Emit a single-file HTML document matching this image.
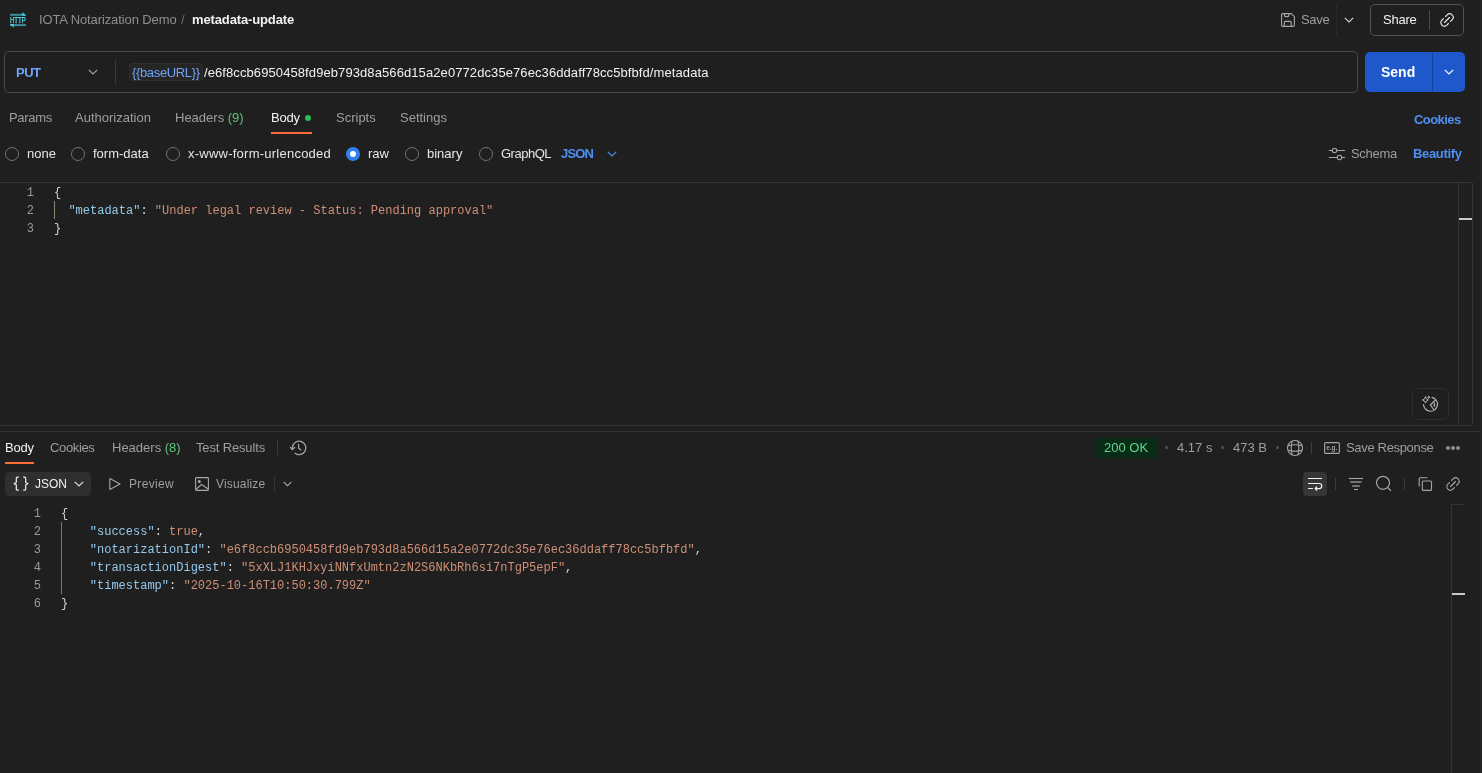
<!DOCTYPE html>
<html><head><meta charset="utf-8">
<style>
*{box-sizing:border-box;margin:0;padding:0}
html,body{width:1482px;height:773px;overflow:hidden;background:#1f1f1f;font-family:"Liberation Sans",sans-serif;font-size:13px;color:#e6e6e6}
.a{position:absolute;white-space:pre;line-height:1}
.t2{color:#9e9e9e}
.blue{color:#4f8ef2}
.code{position:absolute;font-family:"Liberation Mono",monospace;font-size:12px;line-height:18px;white-space:pre;color:#d4d4d4}
.ln{position:absolute;font-family:"Liberation Mono",monospace;font-size:12px;line-height:18px;white-space:pre;color:#9a9a9a;text-align:right}
.k{color:#93caec}.s{color:#cf8f76}.b{color:#cf9173}
svg{position:absolute;overflow:visible}
.hl{position:absolute;background:#363636}
.rad{position:absolute;top:147px;width:14px;height:14px;border:1px solid #737373;border-radius:50%}
</style></head><body><div id="root" style="position:absolute;left:0;top:0;width:1482px;height:773px;will-change:transform">

<!-- ===== header ===== -->
<svg style="left:0;top:0" width="34" height="34" viewBox="0 0 34 34">
  <rect x="10" y="13.8" width="15.5" height="2" fill="#3a8f9c"/>
  <path d="M22.2 12 L25.9 15.7 L22.6 15.7 Z" fill="#4fd6ea"/>
  <rect x="10" y="24.1" width="15.9" height="2" fill="#3a8f9c"/>
  <path d="M10 24.1 L13.8 27.7 L13.6 24.1 Z" fill="#4fd6ea"/>
  <text x="9.9" y="23.2" font-family="Liberation Sans" font-size="8.4" fill="#55e0f2" stroke="#55e0f2" stroke-width="0.25" textLength="15.8" lengthAdjust="spacingAndGlyphs">HTTP</text>
</svg>
<div class="a" style="left:39px;top:13px;color:#8f8f8f;letter-spacing:-0.11px">IOTA Notarization Demo</div>
<div class="a" style="left:181px;top:13px;color:#6b6b6b">/</div>
<div class="a" style="left:192px;top:13px;color:#f2f2f2;font-weight:700;letter-spacing:-0.13px">metadata-update</div>

<svg style="left:1281px;top:13px" width="14" height="14" viewBox="0 0 14 14" fill="none" stroke="#a6a6a6" stroke-width="1.1">
  <path d="M1.5 0.6 H10.3 L13.4 3.7 V12 a1.4 1.4 0 0 1 -1.4 1.4 H2 a1.4 1.4 0 0 1 -1.4 -1.4 V2 a1.4 1.4 0 0 1 1.4 -1.4Z"/>
  <path d="M3.5 0.6 V2.6 a1 1 0 0 0 1 1 H6.8 a1 1 0 0 0 1 -1 V0.6"/>
  <path d="M3.3 13.4 V9.4 a1 1 0 0 1 1 -1 H9.2 a1 1 0 0 1 1 1 V13.4"/>
</svg>
<div class="a t2" style="left:1301px;top:13px;letter-spacing:-0.3px">Save</div>
<div class="hl" style="left:1336px;top:4px;width:1px;height:32px;background:#2a2a2a"></div>
<svg style="left:1344px;top:17px" width="10" height="6" viewBox="0 0 10 6" fill="none" stroke="#d0d0d0" stroke-width="1.2"><path d="M0.8 0.8 L5 5 L9.2 0.8"/></svg>
<div style="position:absolute;left:1370px;top:4px;width:94px;height:32px;border:1px solid #525252;border-radius:5px"></div>
<div class="a" style="left:1383px;top:13px;color:#f2f2f2;letter-spacing:-0.25px">Share</div>
<div class="hl" style="left:1429px;top:10px;width:1px;height:20px;background:#4a4a4a"></div>
<svg style="left:1437.15px;top:9.90px" width="20" height="20" viewBox="0 0 20 20" fill="none" stroke="#e6e6e6" stroke-width="1.2" stroke-linecap="round">
  <g transform="rotate(-45 10 10)"><path d="M11.5 6.5 H13.7 A3.5 3.5 0 0 1 13.7 13.5 H11.5 M8.5 6.5 H6.3 A3.5 3.5 0 0 0 6.3 13.5 H8.5 M6.5 10 H13.5"/></g>
</svg>

<!-- ===== URL bar ===== -->
<div style="position:absolute;left:4px;top:51px;width:1354px;height:42px;border:1px solid #4a4a4a;border-radius:5px"></div>
<div class="a" style="left:16px;top:66px;color:#6fa3f7;font-weight:700;letter-spacing:-0.5px">PUT</div>
<svg style="left:88px;top:69px" width="10" height="6" viewBox="0 0 10 6" fill="none" stroke="#a6a6a6" stroke-width="1.1"><path d="M0.8 0.8 L5 5 L9.2 0.8"/></svg>
<div class="hl" style="left:115px;top:60px;width:1px;height:24px;background:#3a3a3a"></div>
<div style="position:absolute;left:129px;top:63px;width:74px;height:18px;background:#262626;border:1px solid #2e2e2e;border-radius:3px"></div>
<div class="a" style="left:132px;top:66px;color:#6fa3f7;letter-spacing:-0.35px">{{baseURL}}</div>
<div class="a" style="left:204px;top:66px;color:#f2f2f2;letter-spacing:0.09px">/e6f8ccb6950458fd9eb793d8a566d15a2e0772dc35e76ec36ddaff78cc5bfbfd/metadata</div>

<div style="position:absolute;left:1365px;top:52px;width:100px;height:40px;background:#1e58cb;border-radius:5px"></div>
<div class="hl" style="left:1432px;top:52px;width:1px;height:40px;background:#15429a"></div>
<div class="a" style="left:1381px;top:65px;color:#fff;font-weight:700;font-size:14px">Send</div>
<svg style="left:1444px;top:69px" width="10" height="6" viewBox="0 0 10 6" fill="none" stroke="#fff" stroke-width="1.2"><path d="M0.8 0.8 L5 5 L9.2 0.8"/></svg>

<!-- ===== request tabs ===== -->
<div class="a t2" style="left:9px;top:111px;letter-spacing:-0.3px">Params</div>
<div class="a t2" style="left:75px;top:111px">Authorization</div>
<div class="a t2" style="left:175px;top:111px">Headers <span style="color:#5fc27e">(9)</span></div>
<div class="a" style="left:271px;top:111px;color:#f2f2f2;letter-spacing:-0.25px">Body</div>
<div style="position:absolute;left:305px;top:115px;width:6px;height:6px;border-radius:3px;background:#2ebd5a"></div>
<div class="hl" style="left:271px;top:132px;width:41px;height:2px;background:#ff6c37"></div>
<div class="a t2" style="left:336px;top:111px">Scripts</div>
<div class="a t2" style="left:400px;top:111px">Settings</div>
<div class="a blue" style="left:1414px;top:113px;font-weight:700;letter-spacing:-0.55px">Cookies</div>

<!-- ===== body type radios ===== -->
<div class="rad" style="left:5px"></div>
<div class="a" style="left:27px;top:147px">none</div>
<div class="rad" style="left:71px"></div>
<div class="a" style="left:93px;top:147px">form-data</div>
<div class="rad" style="left:166px"></div>
<div class="a" style="left:188px;top:147px;letter-spacing:0.24px">x-www-form-urlencoded</div>
<div class="rad" style="left:346px;border:4px solid #2f7ff0;background:#fff"></div>
<div class="a" style="left:368px;top:147px">raw</div>
<div class="rad" style="left:405px"></div>
<div class="a" style="left:427px;top:147px">binary</div>
<div class="rad" style="left:479px"></div>
<div class="a" style="left:501px;top:147px;letter-spacing:-0.5px">GraphQL</div>
<div class="a blue" style="left:561px;top:147px;font-weight:700;letter-spacing:-0.85px">JSON</div>
<svg style="left:607px;top:151px" width="10" height="6" viewBox="0 0 10 6" fill="none" stroke="#4f8ef2" stroke-width="1.2"><path d="M0.8 0.8 L5 5 L9.2 0.8"/></svg>

<svg style="left:1328px;top:147px" width="18" height="14" viewBox="0 0 18 14" fill="none" stroke="#a6a6a6" stroke-width="1.1">
  <path d="M0.8 3.5 H4.3 M8.7 3.5 H17"/><circle cx="6.5" cy="3.5" r="2.2"/>
  <path d="M0.8 10.5 H9.3 M13.7 10.5 H17"/><circle cx="11.5" cy="10.5" r="2.2"/>
</svg>
<div class="a t2" style="left:1351px;top:147px;letter-spacing:-0.3px">Schema</div>
<div class="a blue" style="left:1413px;top:147px;font-weight:700;letter-spacing:-0.33px">Beautify</div>

<!-- ===== request editor ===== -->
<div style="position:absolute;left:-2px;top:182px;width:1475px;height:242px;border:1px solid #363636;border-bottom:none;border-radius:0 2px 0 0"></div>
<div class="hl" style="left:0;top:425px;width:1471px;height:1px"></div>
<div class="hl" style="left:1458px;top:183px;width:1px;height:242px;background:#333"></div>
<div class="hl" style="left:1459px;top:218px;width:13px;height:2px;background:#c9c9c1"></div>
<div class="hl" style="left:1480px;top:0px;width:1px;height:773px;background:#2a2a2a"></div>

<div class="ln" style="left:0;top:184px;width:34px">1
2
3</div>
<div class="hl" style="left:54px;top:201px;width:1px;height:18px;background:#8a8676"></div>
<div class="code" style="left:54px;top:184px">{
  <span class="k">"metadata"</span>: <span class="s">"Under legal review - Status: Pending approval"</span>
}</div>

<div style="position:absolute;left:1412px;top:388px;width:37px;height:32px;border:1px solid #2e2e2e;border-radius:7px"></div>
<svg style="left:1420px;top:394px" width="22" height="22" viewBox="0 0 22 22" fill="none" stroke="#b4b4b4" stroke-width="1.15" stroke-linecap="round" stroke-linejoin="round">
  <path d="M12 3.4 A7 7 0 1 1 3.5 10.6"/>
  <path d="M15.4 5.8 L10.4 11 L13.7 15.5"/>
  <path d="M14.4 9.1 Q15.3 11 14.4 12.8 Q13.5 11 14.4 9.1Z" fill="#b4b4b4" stroke-width="0.8"/>
  <path d="M5.5 2.9 Q5.9 5.6 8.3 6 Q5.9 6.4 5.5 9.1 Q5.1 6.4 2.5 6 Q5.1 5.6 5.5 2.9Z" stroke-width="1"/>
  <path d="M8.8 2.2 Q9 3.2 10 3.4 Q9 3.6 8.8 4.6 Q8.6 3.6 7.6 3.4 Q8.6 3.2 8.8 2.2Z" fill="#b4b4b4" stroke-width="0.6"/>
</svg>

<!-- ===== split ===== -->
<div class="hl" style="left:0;top:431px;width:1480px;height:1px;background:#333"></div>

<!-- ===== response tabs ===== -->
<div class="a" style="left:5px;top:441px;color:#f2f2f2;letter-spacing:-0.2px">Body</div>
<div class="hl" style="left:5px;top:462px;width:29px;height:2px;background:#ff6c37"></div>
<div class="a t2" style="left:50px;top:441px;letter-spacing:-0.35px">Cookies</div>
<div class="a t2" style="left:112px;top:441px">Headers <span style="color:#5fc27e">(8)</span></div>
<div class="a t2" style="left:196px;top:441px;letter-spacing:-0.15px">Test Results</div>
<div class="hl" style="left:277px;top:440px;width:1px;height:15px;background:#3a3a3a"></div>
<svg style="left:280px;top:434px" width="32" height="28" viewBox="0 0 32 28" fill="none" stroke="#a6a6a6" stroke-width="1.2" stroke-linecap="round" stroke-linejoin="round">
  <path d="M15.08 19.18 A6.7 6.7 0 1 0 12.6 12.6 L12.3 15.2"/>
  <path d="M10.4 13.3 L12.3 15.5 L14.6 13.5"/>
  <path d="M18.6 10.4 V14.3 L20.7 15.8"/>
</svg>

<div style="position:absolute;left:1096px;top:438px;width:61px;height:20px;background:#092c16;border-radius:4px"></div>
<div class="a" style="left:1104px;top:441px;color:#64d48e">200 OK</div>
<div style="position:absolute;left:1165px;top:446px;width:3px;height:3px;border-radius:2px;background:#555"></div>
<div class="a t2" style="left:1177px;top:441px">4.17 s</div>
<div style="position:absolute;left:1221px;top:446px;width:3px;height:3px;border-radius:2px;background:#555"></div>
<div class="a t2" style="left:1233px;top:441px">473 B</div>
<div style="position:absolute;left:1276px;top:446px;width:3px;height:3px;border-radius:2px;background:#555"></div>
<svg style="left:1286px;top:439px" width="18" height="18" viewBox="0 0 18 18" fill="none" stroke="#a6a6a6" stroke-width="1.1">
  <circle cx="9" cy="9" r="7.5"/>
  <path d="M6 2.2 Q4.3 9 6 15.8 M12 2.2 Q13.7 9 12 15.8 M2.2 6.6 Q9 5 15.8 6.6 M2.2 11.4 Q9 13 15.8 11.4"/>
</svg>
<div class="hl" style="left:1311px;top:442px;width:1px;height:12px;background:#3a3a3a"></div>
<svg style="left:1324px;top:442px" width="16" height="12" viewBox="0 0 16 12" fill="none" stroke="#a6a6a6" stroke-width="1.1">
  <rect x="0.6" y="0.6" width="14.8" height="10.8" rx="1.2"/>
  <text x="2.2" y="8.3" font-family="Liberation Sans" font-size="7.5" font-weight="700" fill="#a6a6a6" stroke="none" textLength="11" lengthAdjust="spacingAndGlyphs">e.g.</text>
</svg>
<div class="a t2" style="left:1346px;top:441px;letter-spacing:-0.33px">Save Response</div>
<svg style="left:1445px;top:445px" width="16" height="6" viewBox="0 0 16 6" fill="#8e8e8e">
  <circle cx="3" cy="3" r="2"/><circle cx="8" cy="3" r="2"/><circle cx="13" cy="3" r="2"/>
</svg>

<!-- ===== response toolbar ===== -->
<div style="position:absolute;left:5px;top:472px;width:86px;height:24px;background:#2f2f2f;border-radius:4px"></div>
<svg style="left:13px;top:476.4px" width="16" height="16" viewBox="0 0 16 16" fill="none" stroke="#f0f0f0" stroke-width="1.2" stroke-linejoin="round">
  <path d="M5.8 1.2 H4.4 a1.1 1.1 0 0 0 -1.1 1.1 V6.5 L1.2 7.6 L3.3 8.7 V13 a1.1 1.1 0 0 0 1.1 1.1 H5.8"/>
  <path d="M10.2 1.2 H11.6 a1.1 1.1 0 0 1 1.1 1.1 V6.5 L14.8 7.6 L12.7 8.7 V13 a1.1 1.1 0 0 1 -1.1 1.1 H10.2"/>
</svg>
<div class="a" style="left:35px;top:478px;color:#f2f2f2;font-size:12px">JSON</div>
<svg style="left:74px;top:481px" width="10" height="6" viewBox="0 0 10 6" fill="none" stroke="#e0e0e0" stroke-width="1.2"><path d="M0.8 0.8 L5 5 L9.2 0.8"/></svg>
<svg style="left:109px;top:478px" width="12" height="12" viewBox="0 0 12 12" fill="none" stroke="#a6a6a6" stroke-width="1.1"><path d="M0.8 0.6 L11 6 L0.8 11.4 Z" stroke-linejoin="round"/></svg>
<div class="a t2" style="left:129px;top:478px;font-size:12px;letter-spacing:0.35px">Preview</div>
<svg style="left:195px;top:477px" width="14" height="14" viewBox="0 0 14 14" fill="none" stroke="#a6a6a6" stroke-width="1.1">
  <rect x="0.6" y="0.6" width="12.8" height="12.8" rx="0.8"/><circle cx="4.3" cy="4.5" r="1" fill="#a6a6a6"/>
  <path d="M0.8 12.5 L6.5 7.5 L13.2 12"/>
</svg>
<div class="a t2" style="left:216px;top:478px;font-size:12px;letter-spacing:0.17px">Visualize</div>
<div class="hl" style="left:274px;top:476px;width:1px;height:16px;background:#333"></div>
<svg style="left:283px;top:481px" width="9" height="6" viewBox="0 0 9 6" fill="none" stroke="#a6a6a6" stroke-width="1.1"><path d="M0.6 0.8 L4.5 4.7 L8.4 0.8"/></svg>

<div style="position:absolute;left:1303px;top:472px;width:24px;height:24px;background:#363636;border-radius:4px"></div>
<svg style="left:1303px;top:472px" width="24" height="24" viewBox="0 0 24 24" fill="none" stroke="#f0f0f0" stroke-width="1.2">
  <path d="M5 6.5 H19 M5 11.5 H16.2 a2.55 2.55 0 0 1 0 5.1 H12.5 M5 16.5 H10"/>
  <path d="M14 14.5 L12.2 16.5 L14 18.5"/>
</svg>
<div class="hl" style="left:1335px;top:478px;width:1px;height:12px;background:#3a3a3a"></div>
<svg style="left:1348px;top:477px" width="16" height="14" viewBox="0 0 16 14" fill="none" stroke="#a6a6a6">
  <path d="M0.8 1.5 H15" stroke-width="1.1"/><path d="M2.2 5 H13.5" stroke-width="1.6" stroke="#8a8a8a"/><path d="M4.2 9 H11.7" stroke-width="1.6" stroke="#8a8a8a"/><path d="M6 12.5 H10" stroke-width="1.1"/>
</svg>
<svg style="left:1375px;top:475px" width="17" height="17" viewBox="0 0 17 17" fill="none" stroke="#a6a6a6" stroke-width="1.2">
  <circle cx="8" cy="7.8" r="6.5"/><path d="M12.7 12.5 L16 15.8"/>
</svg>
<div class="hl" style="left:1404px;top:478px;width:1px;height:12px;background:#3a3a3a"></div>
<svg style="left:1418px;top:477px" width="14" height="14" viewBox="0 0 14 14" fill="none" stroke="#a6a6a6" stroke-width="1.1">
  <path d="M1.2 9.5 V1.8 a1 1 0 0 1 1 -1 H9.5"/><rect x="4.3" y="4" width="9.2" height="9.4" rx="1"/>
</svg>
<svg style="left:1443.10px;top:474.00px" width="20" height="20" viewBox="0 0 20 20" fill="none" stroke="#a6a6a6" stroke-width="1.15" stroke-linecap="round">
  <g transform="rotate(-45 10 10)"><path d="M11.5 6.5 H13.7 A3.5 3.5 0 0 1 13.7 13.5 H11.5 M8.5 6.5 H6.3 A3.5 3.5 0 0 0 6.3 13.5 H8.5 M6.5 10 H13.5"/></g>
</svg>

<!-- ===== response body ===== -->
<div class="hl" style="left:1451px;top:504px;width:1px;height:269px;background:#333"></div>
<div class="hl" style="left:1451px;top:504px;width:14px;height:1px;background:#333"></div>
<div class="hl" style="left:1452px;top:593px;width:13px;height:2px;background:#c9c9c1"></div>

<div class="ln" style="left:0;top:505px;width:41px">1
2
3
4
5
6</div>
<div class="hl" style="left:61px;top:522px;width:1px;height:72px;background:#7a776c"></div>
<div class="code" style="left:61px;top:505px">{
    <span class="k">"success"</span>: <span class="b">true</span>,
    <span class="k">"notarizationId"</span>: <span class="s">"e6f8ccb6950458fd9eb793d8a566d15a2e0772dc35e76ec36ddaff78cc5bfbfd"</span>,
    <span class="k">"transactionDigest"</span>: <span class="s">"5xXLJ1KHJxyiNNfxUmtn2zN2S6NKbRh6si7nTgP5epF"</span>,
    <span class="k">"timestamp"</span>: <span class="s">"2025-10-16T10:50:30.799Z"</span>
}</div>

</div></body></html>
